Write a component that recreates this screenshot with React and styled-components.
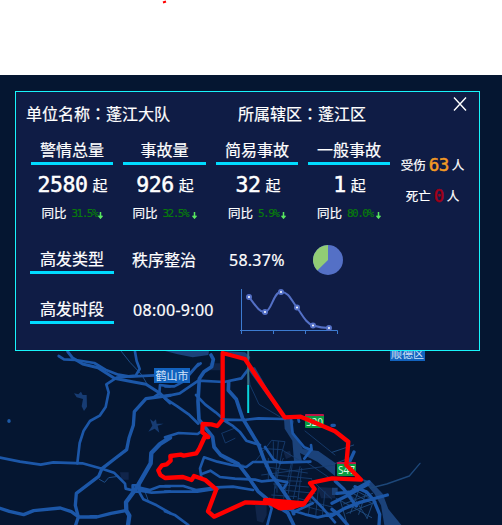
import React from 'react';
import styled, { createGlobalStyle } from 'styled-components';

const GlobalStyle = createGlobalStyle`
  body { margin: 0; background: #fff; overflow: hidden; }
  * { box-sizing: border-box; }
`;

const Page = styled.div`
  width: 502px;
  height: 525px;
  display: flex;
  flex-direction: column;
  overflow: hidden;
  color: #fff;
  font: 16px/20px 'Noto Sans', 'Noto Sans CJK SC', sans-serif;
`;
const TopStrip = styled.header`
  height: 75px;
  flex: none;
  padding-left: 160px;
  svg { display: block; }
`;
const MapArea = styled.main`
  position: relative;
  flex: 1;
  background: #051631;
`;
const MapCanvas = styled.svg`
  display: block;
  width: 502px;
  height: 450px;
`;
const MapLabel = styled.span`
  position: absolute;
  left: ${(p) => p.$x}px;
  top: ${(p) => p.$y}px;
  width: ${(p) => p.$w}px;
  height: 15px;
  text-align: center;
  white-space: nowrap;
  font-size: 11px;
  line-height: 15px;
  color: #d3e4fa;
  background: #1262bd;
`;
const RoadSign = styled.span`
  position: absolute;
  z-index: 1;
  left: ${(p) => p.$x}px;
  top: ${(p) => p.$y}px;
  width: 19px;
  height: 14px;
  border-top: 2px solid #bb1648;
  border-radius: 1px;
  background: #079b40;
  color: #d5f5dd;
  text-align: center;
  font-size: 10px;
  line-height: 12px;
`;
const Boundary = styled(MapCanvas)`
  position: absolute;
  z-index: 2;
  inset: 0;
`;
const Panel = styled.section`
  position: absolute;
  z-index: 3;
  left: 15px;
  top: 16px;
  width: 465px;
  height: 260px;
  border: 1px solid #18f4fa;
  background: #0f1c45;
  -webkit-text-stroke: 0.2px currentColor;
`;
const Header = styled.div`
  display: grid;
  grid-template-columns: 212px 215px 14px;
  height: 45px;
  padding: 11px 0 0 10px;
  white-space: nowrap;
`;
const Colon = styled.span`
  font-family: 'Noto Sans CJK TC', sans-serif;
`;
const Close = styled.button`
  width: 14px;
  height: 14px;
  margin-top: -6px;
  padding: 0;
  border: 0;
  background: none;
  svg { display: block; }
`;
const Summary = styled.div`
  display: flex;
  height: 102px;
  padding-left: 15px;
`;
const Stats = styled.div`
  display: grid;
  grid-template-columns: 82px 83px 82px 82px;
  column-gap: 10px;
`;
const Stat = styled.div`
  display: flex;
  flex-direction: column;
  align-items: center;
  white-space: nowrap;
`;
const Title = styled.div`
  width: 100%;
  height: 28px;
  padding-top: 3px;
  text-align: center;
  border-bottom: 3px solid #00dcff;
`;
const Count = styled.div`
  display: flex;
  align-items: center;
  gap: 5px;
  height: 40px;
  font-size: 15px;
  padding-left: ${(p) => p.$shift}px;
`;
const Digits = styled.span`
  font-family: 'DejaVu Sans Mono', monospace;
  font-size: ${(p) => p.$size}px;
  letter-spacing: -0.5px;
  color: ${(p) => p.$color || '#fff'};
  -webkit-text-stroke: 0.5px currentColor;
`;
const Change = styled.div`
  display: flex;
  align-items: center;
  height: 18px;
  font-size: 12.5px;
  svg { flex: none; margin-top: 3px; }
`;
const Rate = styled.span`
  width: ${(p) => p.$w}px;
  margin-left: 5px;
  color: #087b0c;
  font: 11px/14px 'DejaVu Sans Mono', monospace;
  letter-spacing: -1.5px;
`;
const Casualties = styled.div`
  display: flex;
  flex-direction: column;
  gap: 11px;
  width: 85px;
  padding-top: 19px;
`;
const Casualty = styled.div`
  display: flex;
  justify-content: center;
  align-items: center;
  gap: 3px;
  height: 20px;
  font-size: 12.5px;
  white-space: nowrap;
`;
const CasualtyDigits = styled(Digits)`
  padding-bottom: 3px;
`;
const Row = styled.div`
  display: grid;
  grid-template-columns: 84px 97px 84px 60px;
  height: 50px;
  padding-left: 14px;
  white-space: nowrap;
`;
const RowTitle = styled(Title)`
  height: 29px;
  margin-top: 6px;
  padding-top: 4px;
`;
const Value = styled.span`
  padding: 11px 0 0 ${(p) => p.$indent}px;
  letter-spacing: ${(p) => p.$tracking || 0}px;
`;
const Pie = styled.svg`
  width: 32px;
  height: 32px;
  margin: 5px 0 0 17px;
`;
const Trend = styled.svg`
  width: 102px;
  height: 50px;
  margin: -2px 0 0 27px;
`;

const stats = [
  { name: '警情总量', count: '2580', rate: '31.5%', w: 26, shift: 1 },
  { name: '事故量', count: '926', rate: '32.5%', w: 29, shift: 1 },
  { name: '简易事故', count: '32', rate: '5.9%', w: 23, shift: 2 },
  { name: '一般事故', count: '1', rate: '80.0%', w: 29, shift: 1 },
];

const points = [[11, 10], [27, 25], [43, 5], [59, 20.5], [75, 38.5], [91, 41]];

const DownArrow = () => (
  <svg width="5" height="7" viewBox="0 0 5 7">
    <path d="M2.5 0V6M.5 3.7 2.5 6 4.5 3.7" fill="none" stroke="#58e85f" strokeWidth="1.5" />
  </svg>
);

const Roads = () => (
  <MapCanvas viewBox="0 75 502 450" fill="none" strokeLinejoin="round" strokeLinecap="round">
    <g transform="translate(0 345) scale(.33333)">
      <path d="M222 145 235 148 243 140 248 150 260 150 261 185 252 198 245 184 249 162 230 157ZM450 222 460 230 468 223 470 236 491 236 473 242 478 263 464 251 445 260 457 242Z" fill="#173c73" />
      <path d="M360 382H386V404H364Z" fill="#10244a" />
      <path d="M27 227V229" stroke="#1d59a5" strokeWidth="10" />
      <g stroke="#1d4c87" strokeWidth="3">
        <path d="M363 18 390 52 424 88 446 125M298 403 314 412 326 398 355 394M435 440 446 470" />
      </g>
      <g stroke="#1c57a8" strokeWidth="8">
        <path d="M176 33 192 43 227 45 283 54 320 76 355 89 390 95 462 91" />
        <path d="M203 20 217 38 248 57 294 68 343 100 397 110 438 118 480 145 510 174" strokeWidth="9" />
        <path d="M405 20 410 48 419 72 407 92 350 98 319 118 326 142 317 186 299 212 270 228 251 257 239 294 232 355" />
        <path d="M510 151 438 161 403 200 400 241 387 279 380 314 347 339 306 371 296 394 229 445 226 481 235 516 227 540" strokeWidth="10" />
        <path d="M0 338 60 350 122 359 160 352 247 355 306 371 342 383 375 416 377 431 408 439" />
        <path d="M510 278 480 297 454 324 452 355 410 428 378 472 379 497 388 512 384 540" strokeWidth="13" />
        <path d="M0 490 28 499 71 509 101 497 181 489 214 500 236 516 290 516 333 505 377 497" strokeWidth="10" />
        <path d="M398 421H418V440H398ZM417 440 430 463 470 481 510 504M418 428 450 435 480 424 510 424M420 437 455 443 510 440" />
        <path d="M272 514H290M480 120 478 145 460 158M510 124 480 120" />
      </g>
    </g>
    <g transform="translate(165 345) scale(.33333)">
      <path d="M0 18H132L130 30 83 37 38 28ZM178 18 240 22 256 36 250 50 222 33ZM245 68 270 67 291 103 355 215 386 227 382 254 400 287 414 312 460 318 510 353 510 393 458 351 405 324 411 347 387 348 382 287 359 251 357 222Z" fill="#1b427a" />
      <path d="M270 480H305V510L294 533 276 528ZM134 55H165V76H134ZM356 322 375 318 380 335 363 342ZM458 426 510 429V460H468Z" fill="#112549" />
      <g stroke="#173d70" strokeWidth="2.6">
        <path d="M250 80 255 120 282 178 344 215M171 267 181 294 210 280M208 250 170 265M142 276 161 330 190 350 235 360M270 350 320 286 360 290 350 325 331 430M290 390 510 360M285 310 350 314 410 350M355 340 335 382 336 442M382 356 370 445M410 370 397 484M330 390 440 401M326 417 430 426M350 435 450 445M400 460 501 486M425 485 500 505M422 350 500 403M420 258 510 330" />
        <path d="M310 340V410M325 290V340M340 290 325 480M380 350 356 460M405 365 385 461M300 365 427 384M305 405 410 409M320 450 395 455M440 405 500 462M442 430 430 508M460 430 452 513M480 440 472 512" />
      </g>
      <g stroke="#1c57a8" strokeWidth="8">
        <path d="M138 30 145 43 140 65 117 80 103 101 99 169 102 224 143 276 147 306 167 330 220 357 246 391 279 439 316 470 368 503 386 540" strokeWidth="11" />
        <path d="M0 124H28L55 110 94 65 107 55M35 110 70 91 100 57M0 154 44 145 100 107 177 111 229 100 249 74M0 160 37 184 71 208 100 236M0 277 41 264 98 267 109 259M93 150 121 179 152 202 181 227" />
        <path d="M191 112 190 136 214 163 224 194 233 220 254 255 281 300 297 344 319 390 342 420 374 467 386 506" strokeWidth="11" />
        <path d="M174 224 236 225 280 220 360 222M173 224 201 241 224 260 244 287 285 300M300 306 325 343 344 353 436 350M378 222 383 265 418 307 438 315 418 341M438 300 440 315M400 222 402 230M109 396 105 370 117 337 157 350 200 360 244 366 264 351 345 351M108 388 136 377 165 396 210 401 270 404 290 409 334 405 367 412 356 430M0 423H55L93 435 155 427 204 425 264 435M0 440 97 440 160 430M0 499 31 511 70 540M440 455 470 486 510 532M308 470 320 490 307 540M510 505 458 517 420 508 368 492M388 500 443 475" />
      </g>
    </g>
    <g transform="translate(332 345) scale(.33333)">
      <path d="M89 401 118 410 152 446 169 492 208 540H157L147 481 127 446 105 420ZM0 428H17V450H0Z" fill="#1b427a" />
      <g stroke="#1d4779" strokeWidth="3">
        <path d="M0 322 65 300M0 359 58 337M12 460 60 485 119 518M35 477 122 445M44 505 133 471M30 430 69 463 105 519M84 425 55 505M104 436 80 508M127 461 105 521M23 460 43 529M55 441 119 475M61 430 132 470" />
        <path d="M116 429 164 417 232 393 264 355" strokeWidth="4" />
      </g>
      <g stroke="#1c57a8" strokeWidth="10">
        <path d="M0 241H7M66 321 53 350M10 409 35 432 73 483M15 445 56 441 111 410M0 475 48 451 108 418M0 512 38 490 84 472 166 450M69 425 105 442 125 465 143 508 141 540M0 493 20 509 47 540" />
      </g>
    </g>
  </MapCanvas>
);

export default function App() {
  return (
    <>
      <GlobalStyle />
      <Page>
        <TopStrip>
          <svg width="10" height="4"><path d="M3 2.5 6 1.5" stroke="#f00" strokeWidth="2" /></svg>
        </TopStrip>
        <MapArea>
          <Roads />
          <MapLabel $x={154} $y={293} $w={36}>鹤山市</MapLabel>
          <MapLabel $x={390} $y={271} $w={35}>顺德区</MapLabel>
          <RoadSign $x={305} $y={339}>S20</RoadSign>
          <RoadSign $x={337} $y={387}>S47</RoadSign>
          <Boundary viewBox="0 75 502 450" fill="none">
            <path d="M248.2 351V385" stroke="#397083" strokeWidth="2" />
            <path d="M248.2 385V413" stroke="#08d5dc" strokeWidth="2" />
            <g transform="translate(165 345) scale(.33333)" stroke="#f00" strokeWidth="13" strokeLinejoin="round">
              <path d="M173 220V24L240 42 286 111 359 217 407 215 440 229 510 259 550 290 544 360 588 404 501 400 435 414 449 432 417 476 347 490 310 463M417 479 242 472 147 515 129 499 154 433 121 405 87 393 80 405 54 396 0 399 -14 390 -20 376 -9 361 5 358 17 347 16 333 47 329 56 332 94 325 103 311 119 276 130 276 112 262 113 237 139 238 157 243 174 222" />
              <path d="M300 465 417 475 380 488 343 489Z" fill="#f00" />
            </g>
          </Boundary>
          <Panel>
            <Header>
              <span>单位名称<Colon>：</Colon>蓬江大队</span>
              <span>所属辖区<Colon>：</Colon>蓬江区</span>
              <Close aria-label="关闭">
                <svg width="14" height="14" viewBox="0 0 14 14"><path d="M1 .5 13 13.5M13 .5 1 13.5" stroke="#fff" strokeWidth="1.4" /></svg>
              </Close>
            </Header>
            <Summary>
              <Stats>
                {stats.map((s) => (
                  <Stat key={s.name}>
                    <Title>{s.name}</Title>
                    <Count $shift={s.shift}><Digits $size={21.5}>{s.count}</Digits>起</Count>
                    <Change>同比<Rate $w={s.w}>{s.rate}</Rate><DownArrow /></Change>
                  </Stat>
                ))}
              </Stats>
              <Casualties>
                <Casualty>受伤<CasualtyDigits $size={17.5} $color="#f39a24">63</CasualtyDigits>人</Casualty>
                <Casualty>死亡<CasualtyDigits $size={17.5} $color="#a30018">0</CasualtyDigits>人</Casualty>
              </Casualties>
            </Summary>
            <Row>
              <RowTitle>高发类型</RowTitle>
              <Value $indent={18}>秩序整治</Value>
              <Value $indent={18} $tracking={0.25}>58.37%</Value>
              <Pie viewBox="0 0 32 32">
                <circle cx="16" cy="16" r="15" fill="#5470c6" />
                <path d="M16 16V1A15 15 0 0 0 5.3 26.5Z" fill="#91cc75" />
              </Pie>
            </Row>
            <Row>
              <RowTitle>高发时段</RowTitle>
              <Value $indent={19} $tracking={0.3}>08:00-9:00</Value>
              <Trend viewBox="0 0 102 50" fill="none">
                <path d="M3.5 2V47M2 43.5H99.5V47M35.5 43.5V47M67.5 43.5V47" stroke="#3d7bd0" />
                <path d="M11 10C17 18 22 26 27 25C34 24 35 5 43 5C51 5 53 13 59 20.5C65 29 68 36 75 38.5C80 40 86 41 91 41" stroke="#5470c6" strokeWidth="2" />
                {points.map(([x, y]) => <circle key={x} cx={x} cy={y} r="2" fill="#fff" stroke="#5470c6" strokeWidth="2" />)}
              </Trend>
            </Row>
          </Panel>
        </MapArea>
      </Page>
    </>
  );
}
